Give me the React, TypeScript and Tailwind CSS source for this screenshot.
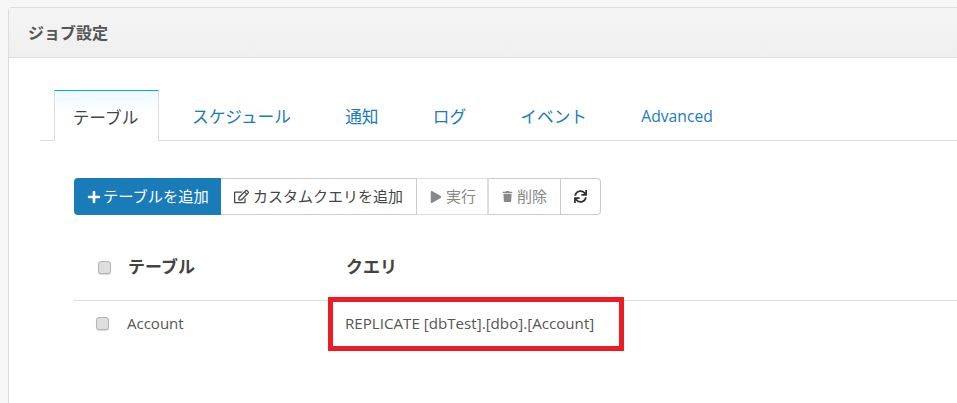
import { FaPlus, FaRegEdit, FaPlay, FaTrash, FaSync } from "react-icons/fa";

const font = { fontFamily: '"Open Sans","Noto Sans CJK JP",sans-serif' };

function Check({ className = "" }: { className?: string }) {
  return <span className={"block w-[13px] h-[13px] rounded-[3px] border border-[#b4b4b4] bg-[#dedede] shadow-[0_1px_1px_rgba(0,0,0,0.15)] " + className} />;
}

const tabs = ["スケジュール", "通知", "ログ", "イベント"];

export default function App() {
  return (
    <div className="w-[957px] h-[403px] overflow-hidden bg-[#f7f7f7] pl-2 pt-[7px] text-[15px] text-[#555]" style={font}>
      <div className="h-[396px] rounded-tl-[4px] border-l border-t border-[#ddd] bg-white">
        <div className="h-[50px] border-b border-[#ddd] bg-gradient-to-b from-[#f5f5f5] to-[#efefef] pl-[19px] flex items-center text-[16px] font-bold text-[#555]">
          ジョブ設定
        </div>
        <div className="pl-[31px] pt-[32px]">
          <div className="flex h-[51px] border-b border-[#ddd] pl-[14px]">
            <div className="w-[105px] h-[51px] border border-b-0 border-[#ddd] border-t-[#00a8ff] bg-gradient-to-b from-[#eef9ff] via-white to-white flex items-center justify-center pt-[3px] pr-[2px] text-[16.7px] text-[#444]">
              テーブル
            </div>
            <div className="ml-[33px] flex items-center gap-[54.2px] pt-[3px] text-[16.7px] text-[#1a7bb9]">
              {tabs.map((t) => (
                <span key={t}>{t}</span>
              ))}
              <span className="text-[15.7px]">Advanced</span>
            </div>
          </div>
          <div className="pl-[34px] pt-[37px]">
            <div className="flex h-[37px] text-[15px]">
              <div className="w-[147px] rounded-l-[4px] bg-[#1a7bb9] text-white text-[15.25px] flex items-center pl-[13px] gap-[2px]">
                <FaPlus size={14} />テーブルを追加
              </div>
              <div className="w-[196px] border-y border-r border-[#ccc] flex items-center pl-[13px] gap-[4px] text-[#444]">
                <FaRegEdit size={15} />カスタムクエリを追加
              </div>
              <div className="w-[72px] border-y border-r-2 border-[#ddd] flex items-center pl-[13px] gap-[4px] text-[#888]">
                <FaPlay size={12} />実行
              </div>
              <div className="w-[72px] border-y border-r border-[#ccc] flex items-center pl-[13px] gap-[4px] text-[#888]">
                <FaTrash size={11} />削除
              </div>
              <div className="w-[40px] rounded-r-[4px] border-y border-r border-[#ccc] flex items-center justify-center text-[#333]">
                <FaSync size={13} />
              </div>
            </div>
            <div className="h-[86px] border-b border-[#ddd] flex items-center pt-[19px] font-bold text-[17px] text-[#444]">
              <Check className="ml-[24px]" />
              <span className="ml-[17px] w-[218px]">テーブル</span>
              <span>クエリ</span>
            </div>
            <div className="flex items-center h-[45px] relative">
              <Check className="ml-[22px]" />
              <span className="ml-[18px]">Account</span>
              <span className="absolute left-[271px] top-[11px] text-[15.15px]">REPLICATE [dbTest].[dbo].[Account]</span>
              <div className="absolute left-[254px] top-[-4px] w-[296px] h-[54px] border-[5px] border-[#ed1c24]" />
            </div>
          </div>
        </div>
      </div>
    </div>
  );
}
